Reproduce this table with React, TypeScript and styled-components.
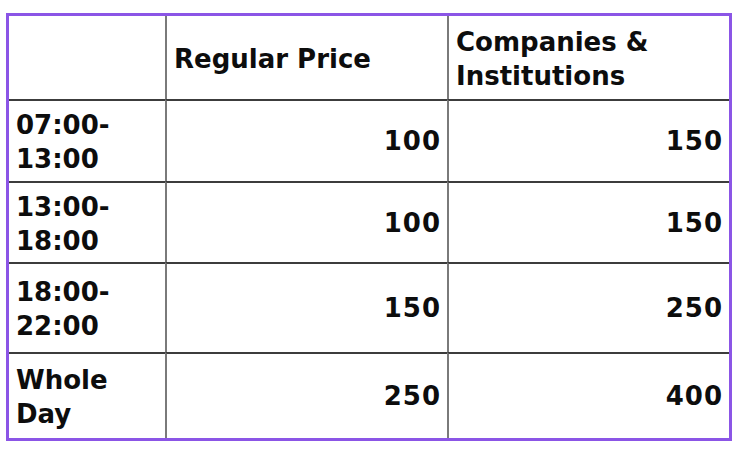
import React from "react";
import styled, { createGlobalStyle } from "styled-components";

const Global = createGlobalStyle`
  html, body { margin: 0; padding: 0; background: #ffffff; }
  body { font-family: "DejaVu Sans", "Inter", sans-serif; }
`;

const Page = styled.div`
  width: 742px;
  height: 452px;
  padding: 13px 0 0 6px;
  box-sizing: border-box;
`;

const Table = styled.div`
  width: 726px;
  box-sizing: border-box;
  border: 3px solid #8b55e6;
  display: grid;
  grid-template-columns: 156px 282px 282px;
  grid-template-rows: 83px 82px 81px 90px 86px;
`;

const Cell = styled.div<{ $first?: boolean; $top?: boolean; $num?: boolean }>`
  box-sizing: border-box;
  display: flex;
  align-items: center;
  justify-content: ${(p) => (p.$num ? "flex-end" : "flex-start")};
  text-align: ${(p) => (p.$num ? "right" : "left")};
  padding: ${(p) => (p.$num ? "0" : "2px")} ${(p) => (p.$num ? "6px" : "7px")} 0 7px;
  border-left: ${(p) => (p.$first ? "none" : "2px solid #7a7a7a")};
  border-top: ${(p) => (p.$top ? "none" : "2px solid #3c3c3c")};
  font-weight: 700;
  font-size: 26px;
  line-height: 34px;
  letter-spacing: ${(p) => (p.$num ? "1px" : "0")};
  color: #0d0d0d;
`;

const rows = [
  { label: ["07:00-", "13:00"], a: "100", b: "150" },
  { label: ["13:00-", "18:00"], a: "100", b: "150" },
  { label: ["18:00-", "22:00"], a: "150", b: "250" },
  { label: ["Whole", "Day"], a: "250", b: "400" },
];

export default function App() {
  return (
    <>
      <Global />
      <Page>
        <Table>
          <Cell $first $top />
          <Cell $top>Regular Price</Cell>
          <Cell $top>
            Companies &amp;
            <br />
            Institutions
          </Cell>
          {rows.map((r) => (
            <React.Fragment key={r.label.join("")}>
              <Cell $first>
                {r.label[0]}
                <br />
                {r.label[1]}
              </Cell>
              <Cell $num>{r.a}</Cell>
              <Cell $num>{r.b}</Cell>
            </React.Fragment>
          ))}
        </Table>
      </Page>
    </>
  );
}
